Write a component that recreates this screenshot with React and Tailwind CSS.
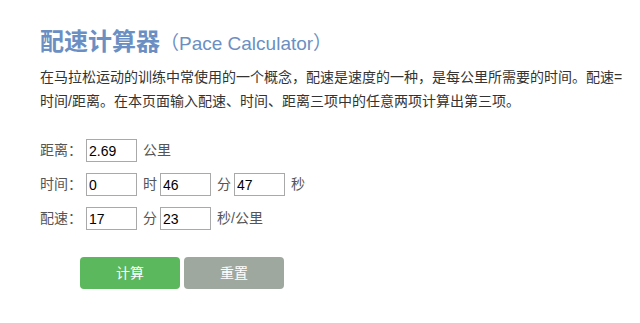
import { useState } from 'react'

const font = { fontFamily: '"Liberation Sans", "Noto Sans CJK SC", sans-serif' }

const Field = ({ value, onChange }) => (
  <input
    value={value}
    onChange={(e) => onChange(e.target.value)}
    className="w-[51px] h-[23px] shrink-0 border border-[#a9a9a9] px-[2px] text-[14px] text-black outline-none"
  />
)

const Label = ({ children }) => <span className="w-[46px] shrink-0 whitespace-nowrap">{children}</span>

const Unit = ({ children }) => <span className="ml-[6px] mr-[3px] whitespace-nowrap">{children}</span>

const App = () => {
  const [dist, setDist] = useState('2.69')
  const [h, setH] = useState('0')
  const [m, setM] = useState('46')
  const [s, setS] = useState('47')
  const [pm, setPm] = useState('17')
  const [ps, setPs] = useState('23')

  return (
    <div className="w-[640px] h-[323px] bg-white overflow-hidden pl-[40px] pt-[27px]" style={font}>
      {/* Title */}
      <h1 className="flex items-baseline text-[#6b8fc3] leading-[30px]">
        <span className="text-[24px] font-bold">配速计算器</span>
        <span className="text-[19px]">（Pace Calculator）</span>
      </h1>
      <p className="w-[592px] mt-[6px] text-[14px] leading-[24px] text-[#333]">
        在马拉松运动的训练中常使用的一个概念，配速是速度的一种，是每公里所需要的时间。配速=时间/距离。在本页面输入配速、时间、距离三项中的任意两项计算出第三项。
      </p>

      {/* Form */}
      <div className="mt-[26px] flex flex-col gap-[11px] text-[14px] text-[#555]">
        <div className="flex items-center">
          <Label>距离：</Label>
          <Field value={dist} onChange={setDist} />
          <Unit>公里</Unit>
        </div>
        <div className="flex items-center">
          <Label>时间：</Label>
          <Field value={h} onChange={setH} />
          <Unit>时</Unit>
          <Field value={m} onChange={setM} />
          <Unit>分</Unit>
          <Field value={s} onChange={setS} />
          <Unit>秒</Unit>
        </div>
        <div className="flex items-center">
          <Label>配速：</Label>
          <Field value={pm} onChange={setPm} />
          <Unit>分</Unit>
          <Field value={ps} onChange={setPs} />
          <Unit>秒/公里</Unit>
        </div>
      </div>

      {/* Buttons */}
      <div className="mt-[27px] ml-[40px] flex gap-[4px]">
        <button className="w-[100px] h-[32px] rounded-[4px] bg-[#5cb85c] text-white text-[14px]">计算</button>
        <button className="w-[100px] h-[32px] rounded-[4px] bg-[#9fa89e] text-white text-[14px]">重置</button>
      </div>
    </div>
  )
}

export default App
